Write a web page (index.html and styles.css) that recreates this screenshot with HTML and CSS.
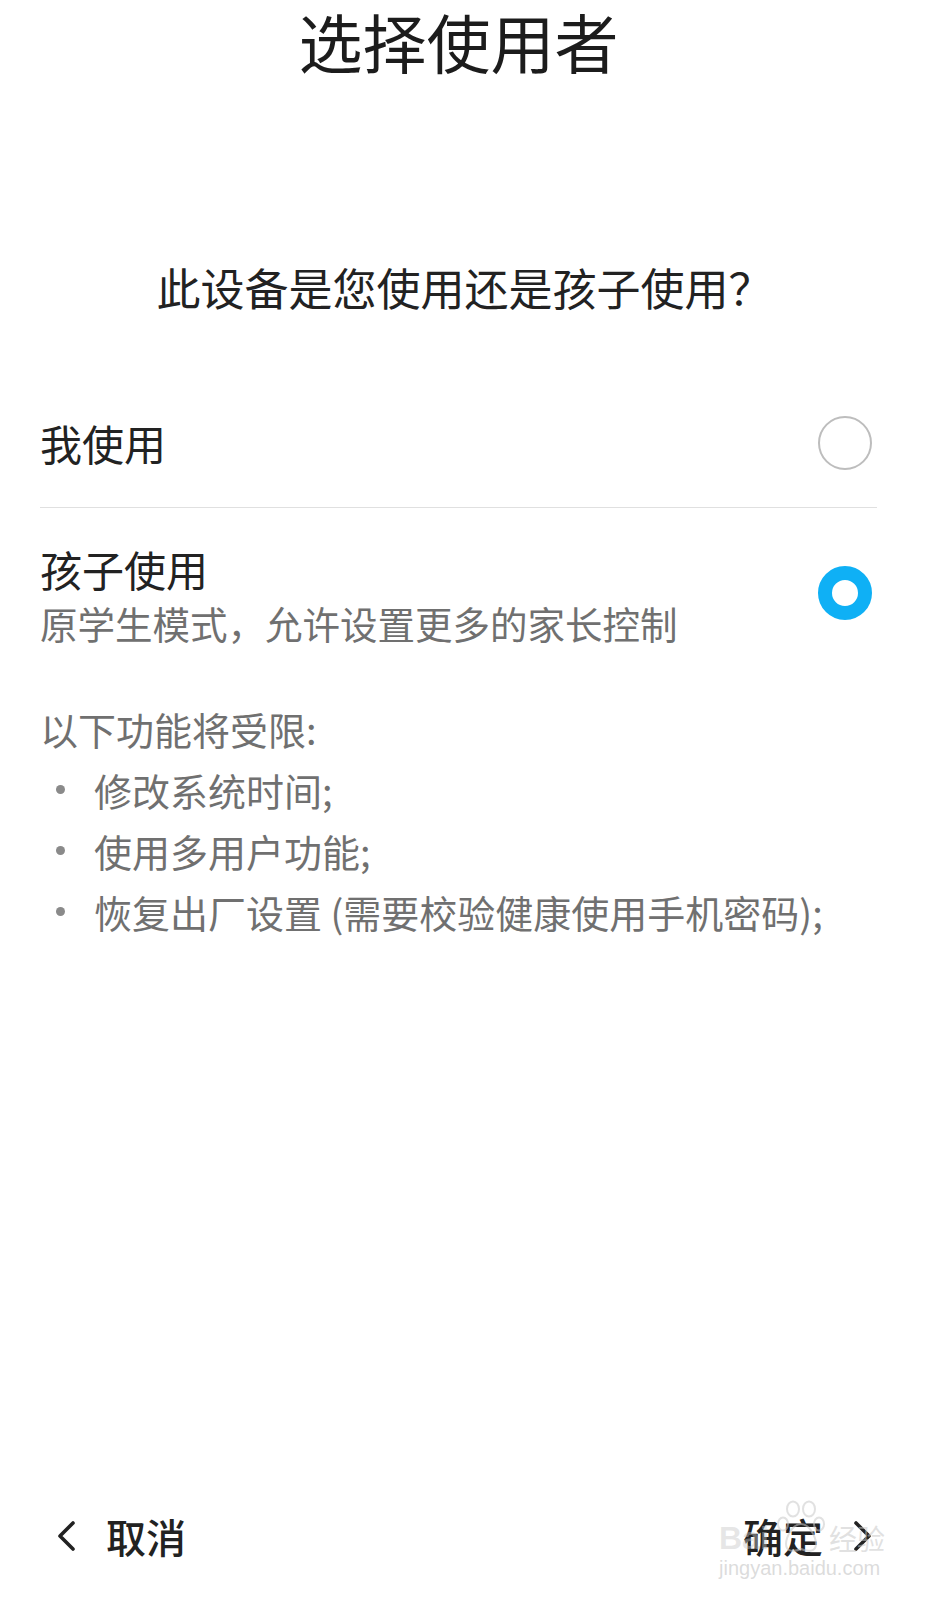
FILE: index.html
```html
<!DOCTYPE html>
<html lang="zh-CN">
<head>
    <meta charset="UTF-8">
    <meta name="viewport" content="width=device-width, initial-scale=1.0">
    <title>选择使用者</title>
    <link rel="stylesheet" href="styles.css">
</head>
<body>
    <div class="page">
        <h1 class="title">选择使用者</h1>
        <p class="question">此设备是您使用还是孩子使用？</p>

        <div class="options">
            <div class="option option-self">
                <div class="option-text">
                    <div class="option-name">我使用</div>
                </div>
                <span class="radio"></span>
            </div>
            <div class="option option-child">
                <div class="option-text">
                    <div class="option-name">孩子使用</div>
                    <div class="option-desc">原学生模式，允许设置更多的家长控制</div>
                </div>
                <span class="radio checked"></span>
            </div>
        </div>

        <div class="limits">
            <p class="limits-head">以下功能将受限:</p>
            <ul class="limits-list">
                <li><span class="dot"></span>修改系统时间;</li>
                <li><span class="dot"></span>使用多用户功能;</li>
                <li><span class="dot"></span>恢复出厂设置 (需要校验健康使用手机密码);</li>
            </ul>
        </div>

        <div class="footer">
            <button class="nav-btn">
                <svg width="20" height="30" viewBox="0 0 20 30"><polyline points="17,2 4,15 17,28" fill="none" stroke="#222" stroke-width="3.6" stroke-linecap="round" stroke-linejoin="round"/></svg>
                <span>取消</span>
            </button>
            <button class="nav-btn">
                <span>确定</span>
                <svg width="20" height="30" viewBox="0 0 20 30"><polyline points="3,2 16,15 3,28" fill="none" stroke="#222" stroke-width="3.6" stroke-linecap="round" stroke-linejoin="round"/></svg>
            </button>

            <!-- watermark -->
            <div class="watermark">
                <div class="wm-top">
                    <span class="wm-bai">Bai</span>
                    <svg class="wm-paw" width="48" height="54" viewBox="0 0 48 54">
                        <g fill="none" stroke="rgba(200,200,200,0.55)" stroke-width="2">
                            <ellipse cx="16" cy="9" rx="6" ry="7.5"/>
                            <ellipse cx="32" cy="9" rx="6" ry="7.5"/>
                            <ellipse cx="6" cy="24" rx="5" ry="6.5"/>
                            <ellipse cx="42" cy="24" rx="5" ry="6.5"/>
                            <path d="M24 24 C15 24 9 38 9 44 C9 52 17 52 24 49 C31 52 39 52 39 44 C39 38 33 24 24 24 Z"/>
                        </g>
                    </svg>
                    <span class="wm-jy">经验</span>
                </div>
                <div class="wm-url">jingyan.baidu.com</div>
            </div>
        </div>
    </div>
</body>
</html>
```

FILE: styles.css
```css
body {
    margin: 0;
    padding: 0;
    background-color: #fff;
    font-family: "Noto Sans CJK SC", "Noto Sans", sans-serif;
    color: #222;
}
.page {
    display: flex;
    flex-direction: column;
    height: 1600px;
    position: relative;
}
.title {
    margin: 0;
    padding-right: 24px;
    font-size: 64px;
    font-weight: 400;
    line-height: 80px;
    text-align: center;
    color: #1c1c1c;
}
.question {
    margin: 177px 0 0;
    padding-right: 12px;
    font-size: 44px;
    line-height: 60px;
    text-align: center;
    color: #222;
}
.options {
    margin: 62px 64px 0 40px;
}
.option {
    display: flex;
    align-items: center;
    justify-content: space-between;
}
.option-self {
    height: 128px;
    border-bottom: 1px solid #e0e0e0;
}
.option-child {
    padding-top: 34px;
}
.option-name {
    font-size: 42px;
    line-height: 54px;
    color: #222;
}
.option-self .option-name {
    line-height: 60px;
}
.option-desc {
    font-size: 37.5px;
    line-height: 54px;
    color: #707070;
}
.radio {
    width: 54px;
    height: 54px;
    box-sizing: border-box;
    border: 2px solid #bdbdbd;
    border-radius: 50%;
    margin-right: 5px;
    flex-shrink: 0;
}
.radio.checked {
    border: 14px solid #0fb0f5;
    margin-top: -6px;
}
.limits {
    margin: 48px 0 0 40px;
    color: #707070;
    font-size: 38px;
}
.limits-head {
    margin: 0;
    line-height: 61px;
}
.limits-list {
    list-style: none;
    margin: 0;
    padding: 0;
}
.limits-list li {
    display: flex;
    align-items: center;
    line-height: 61px;
}
.dot {
    width: 9px;
    height: 9px;
    border-radius: 50%;
    background-color: #8a8a8a;
    margin: 0 29px 0 16px;
}
.footer {
    margin-top: auto;
    height: 128px;
    display: flex;
    align-items: center;
    justify-content: space-between;
    padding: 0 68px 0 56px;
    position: relative;
}
.nav-btn {
    display: flex;
    align-items: center;
    gap: 30px;
    background: none;
    border: none;
    padding: 0;
    font-family: inherit;
    font-size: 40px;
    font-weight: 500;
    line-height: 56px;
    color: #222;
}
.watermark {
    position: absolute;
    right: 52px;
    top: 26px;
    width: 170px;
    pointer-events: none;
}
.wm-top {
    display: flex;
    align-items: flex-end;
    height: 58px;
}
.wm-bai {
    font-family: "Liberation Sans", sans-serif;
    font-size: 32px;
    font-weight: 700;
    line-height: 36px;
    color: rgba(200, 200, 200, 0.45);
    width: 58px;
    overflow: hidden;
}
.wm-paw {
    margin-bottom: 2px;
}
.wm-jy {
    font-size: 28px;
    line-height: 36px;
    color: rgba(200, 200, 200, 0.55);
    margin-left: 4px;
}
.wm-url {
    font-family: "Liberation Sans", sans-serif;
    font-size: 20px;
    line-height: 24px;
    color: rgba(190, 190, 190, 0.55);
}
```
